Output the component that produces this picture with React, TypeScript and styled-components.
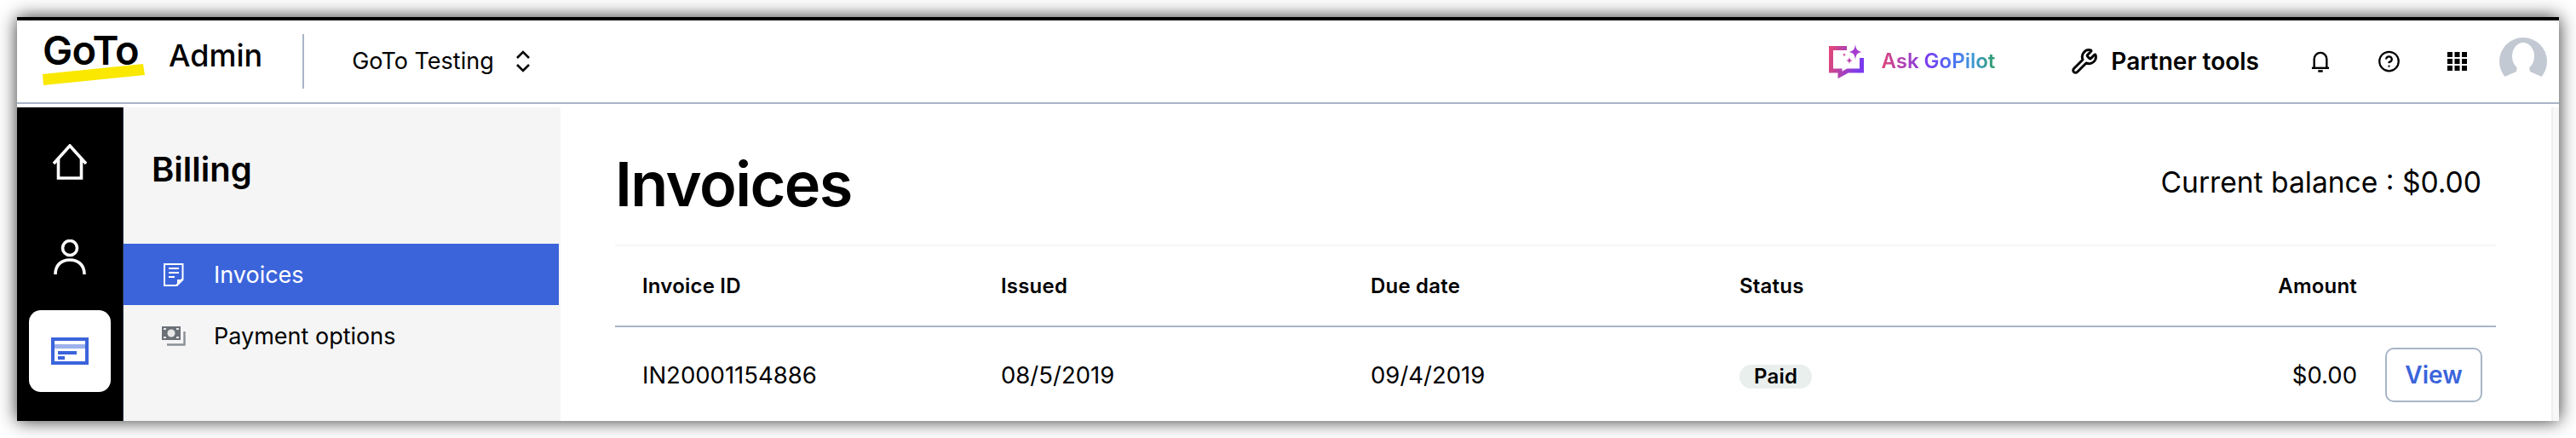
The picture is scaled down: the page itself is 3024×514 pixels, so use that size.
import React from "react";
import styled, { createGlobalStyle } from "styled-components";
import { Wrench, CircleHelp } from "lucide-react";

const Global = createGlobalStyle`
  html, body { margin: 0; padding: 0; background: #fff; overflow: hidden; }
  body { font-family: Inter, "Liberation Sans", sans-serif; color: #000; }
  * { box-sizing: border-box; }
`;

const Page = styled.div`
  width: 3024px;
  height: 514px;
  padding: 20px;
`;
const Frame = styled.div`
  width: 2984px;
  height: 474px;
  border-top: 4px solid #000;
  background: #fff;
  box-shadow: 0 0 20px rgba(0, 0, 0, 0.8);
  display: flex;
  flex-direction: column;
  overflow: hidden;
`;
const Header = styled.header`
  flex: none;
  height: 98px;
  border-bottom: 2px solid #a8b5c7;
  display: flex;
  align-items: center;
  padding: 0 14px 0 30px;
`;
const Logo = styled.div`
  flex: none;
  width: 120px;
  height: 60px;
  margin-top: -2px;
  display: flex;
  flex-direction: column;
`;
const LogoWord = styled.span`
  font-weight: 600;
  font-size: 47px;
  line-height: 36px;
  height: 34px;
  letter-spacing: -0.8px;
  white-space: nowrap;
  color: #000;
`;
const LogoMark = styled.svg`
  flex: none;
  width: 120px;
  height: 26px;
  display: block;
`;
const AppName = styled.span`
  font-size: 36px;
  font-weight: 500;
  line-height: 44px;
  margin: -14px 0 0 28px;
`;
const Divider = styled.div`
  width: 2px;
  height: 64px;
  background: #a8b5c7;
  margin: 0 56px 0 47px;
`;
const Account = styled.span`
  font-size: 27px;
  line-height: 34px;
`;
const Chevrons = styled.svg`
  width: 18px;
  height: 26px;
  margin-left: 25px;
  display: block;
`;
const Tools = styled.div`
  margin-left: auto;
  display: flex;
  align-items: center;
`;
const PilotLink = styled.div`
  display: flex;
  align-items: center;
  gap: 20px;
  margin-right: 89px;
`;
const PilotIcon = styled.svg`
  width: 41px;
  height: 40px;
  display: block;
`;
const PilotText = styled.span`
  font-size: 24px;
  font-weight: 600;
  line-height: 30px;
  background: linear-gradient(90deg, #e0477a 0%, #7a3aee 40%, #4f6ff5 62%, #3f97d8 80%, #2f9e6a 100%);
  -webkit-background-clip: text;
  background-clip: text;
  color: transparent;
`;
const PartnerLink = styled.div`
  display: flex;
  align-items: center;
  gap: 15px;
  font-size: 28px;
  font-weight: 600;
  margin-right: 61px;
`;
const IconSlot = styled.div<{ $w: number; $mr: number }>`
  width: ${(p) => p.$w}px;
  margin-right: ${(p) => p.$mr}px;
  display: flex;
  justify-content: center;
  align-items: center;
`;
const Avatar = styled.svg`
  width: 56px;
  height: 56px;
  display: block;
`;
const Body = styled.div`
  flex: 1;
  min-height: 0;
  margin-top: 4px;
  display: flex;
`;
const Rail = styled.nav`
  flex: none;
  width: 125px;
  background: #000;
  border-right: 1px solid #2b3646;
  padding-top: 8px;
  display: flex;
  flex-direction: column;
  align-items: center;
`;
const RailItem = styled.div`
  height: 112px;
  width: 100%;
  display: flex;
  align-items: center;
  justify-content: center;
`;
const RailTile = styled.div`
  width: 96px;
  height: 96px;
  margin-top: 6px;
  border-radius: 14px;
  background: #fff;
  display: flex;
  align-items: center;
  justify-content: center;
`;
const Panel = styled.aside`
  flex: none;
  width: 513px;
  background: #f5f5f5;
`;
const PanelTitle = styled.h2`
  margin: 0;
  height: 160px;
  padding: 49px 0 0 33px;
  font-size: 40px;
  font-weight: 600;
  line-height: 48px;
`;
const NavRow = styled.div<{ $active?: boolean }>`
  width: 511px;
  height: 72px;
  padding-left: 45px;
  display: flex;
  align-items: center;
  gap: 33px;
  font-size: 27px;
  background: ${(p) => (p.$active ? "#3b64db" : "transparent")};
  color: ${(p) => (p.$active ? "#fff" : "#000")};
`;
const NavIcon = styled.div`
  width: 28px;
  display: flex;
  justify-content: center;
`;
const Main = styled.main`
  flex: 1;
  min-width: 0;
  display: flex;
`;
const Content = styled.div`
  flex: 1;
  min-width: 0;
  padding: 0 65px 0 64px;
`;
const Strip = styled.div`
  flex: none;
  width: 9px;
  background: #f8f8f8;
  border-left: 2px solid #eeeeee;
`;
const TitleRow = styled.div`
  height: 163px;
  padding: 18px 17px 0 0;
  display: flex;
  align-items: center;
  justify-content: space-between;
  border-bottom: 2px solid #f6f6f6;
`;
const Title = styled.h1`
  margin: 0;
  font-size: 72px;
  font-weight: 600;
  line-height: 84px;
  letter-spacing: -1.6px;
`;
const Balance = styled.div`
  font-size: 33.6px;
  line-height: 44px;
  margin-top: -4px;
`;
const GridRow = styled.div<{ $head?: boolean }>`
  display: grid;
  grid-template-columns: 421px 434px 433px 1fr 300px 163px;
  padding-left: 32px;
  align-items: center;
  height: ${(p) => (p.$head ? "95px" : "112px")};
  font-size: ${(p) => (p.$head ? "24px" : "27.500px")};
  font-weight: ${(p) => (p.$head ? 600 : 400)};
  letter-spacing: ${(p) => (p.$head ? "0.2px" : "0")};
  border-bottom: ${(p) => (p.$head ? "2px solid #a8b5c7" : "none")};
`;
const AmountCell = styled.div`
  text-align: right;
`;
const Badge = styled.span`
  display: inline-flex;
  align-items: center;
  height: 28px;
  padding: 0 17px;
  border-radius: 14px;
  background: #e9efec;
  font-size: 24px;
  font-weight: 600;
  letter-spacing: 0.2px;
`;
const ViewButton = styled.button`
  width: 114px;
  height: 64px;
  margin-left: 33px;
  padding: 0;
  border: 2px solid #a8b5c7;
  border-radius: 10px;
  background: #fff;
  color: #3b64db;
  font-family: inherit;
  font-size: 28px;
  font-weight: 600;
`;

const App = () => (
  <Page>
    <Global />
    <Frame>
      <Header>
        <Logo>
          <LogoWord>GoTo</LogoWord>
          <LogoMark viewBox="0 0 120 26">
            <polygon points="0,12 118,0 120,13 1,25" fill="#fae800" />
          </LogoMark>
        </Logo>
        <AppName>Admin</AppName>
        <Divider />
        <Account>GoTo Testing</Account>
        <Chevrons viewBox="0 0 18 26" fill="none" stroke="#000" strokeWidth="2.6">
          <path d="M2 9l7-7 7 7M2 17l7 7 7-7" />
        </Chevrons>
        <Tools>
          <PilotLink>
            <PilotIcon viewBox="0 0 41 40" fill="none">
              <defs>
                <linearGradient id="pilot" x1="0" y1="0" x2="1" y2="0.2">
                  <stop offset="0" stopColor="#e0477a" />
                  <stop offset="1" stopColor="#7a3aee" />
                </linearGradient>
              </defs>
              <path
                d="M21 4.500H2.500V31H13v5l9-5H38.500V16"
                stroke="url(#pilot)"
                strokeWidth="5"
              />
              <path
                d="M31 0c.8 6 2 7.600 7.500 9-5.500 1.200-6.700 2.800-7.500 9-.8-6.200-2-7.800-7.500-9 5.500-1.400 6.700-3 7.500-9z"
                fill="#a63bd0"
              />
              <path
                d="M24 14.500c.4 3 1 4 4 4.500-3 .6-3.600 1.500-4 4.500-.4-3-1-3.900-4-4.500 3-.5 3.600-1.500 4-4.500z"
                fill="#c040b0"
              />
              <path
                d="M18 9.500c.2 2 .6 2.500 2.500 2.800-1.900.3-2.300.9-2.500 2.800-.2-1.900-.6-2.500-2.500-2.800 1.900-.3 2.300-.8 2.500-2.800z"
                fill="#d04aa0"
              />
            </PilotIcon>
            <PilotText>Ask GoPilot</PilotText>
          </PilotLink>
          <PartnerLink>
            <Wrench size={32} strokeWidth={2.2} color="#000" />
            <span>Partner tools</span>
          </PartnerLink>
          <IconSlot $w={22} $mr={56}>
            <svg width="24" height="28" viewBox="0 0 24 28" fill="none" stroke="#000" strokeWidth="2.6">
              <path d="M4 22V11a8 8 0 0 1 16 0v11" />
              <path d="M1 22.500h22" />
              <path d="M9 26.500h6" strokeWidth="2.800" />
            </svg>
          </IconSlot>
          <IconSlot $w={27} $mr={55}>
            <CircleHelp size={32} strokeWidth={2} color="#000" />
          </IconSlot>
          <IconSlot $w={23} $mr={38}>
            <svg width="23" height="22" viewBox="0 0 23 22" fill="#000">
              {[0, 8.5, 17].map((x) =>
                [0, 8, 16].map((y) => <rect key={`${x}-${y}`} x={x} y={y} width="6" height="6" />)
              )}
            </svg>
          </IconSlot>
          <Avatar viewBox="0 0 56 56">
            <circle cx="28" cy="28" r="28" fill="#c3c9d2" />
            <ellipse cx="28" cy="22" rx="13" ry="16" fill="#fff" />
            <path d="M21 34h14l1 6 16 7a28 28 0 0 1-48 0l16-7z" fill="#fff" />
          </Avatar>
        </Tools>
      </Header>
      <Body>
        <Rail>
          <RailItem>
            <svg width="42" height="42" viewBox="0 0 42 42" fill="none" stroke="#fff" strokeWidth="3.6">
              <path d="M2 23L21 2l19 21" />
              <path d="M7.500 17v23h27V17" />
            </svg>
          </RailItem>
          <RailItem>
            <svg width="38" height="42" viewBox="0 0 38 42" fill="none" stroke="#fff" strokeWidth="3.6">
              <circle cx="19" cy="10" r="8.500" />
              <path d="M2 41c0-11 7-17 17-17s17 6 17 17" />
            </svg>
          </RailItem>
          <RailTile>
            <svg width="44" height="32" viewBox="0 0 44 32">
              <rect width="44" height="32" fill="#3b64db" />
              <rect x="4" y="4" width="36" height="24" fill="#fff" />
              <rect x="4" y="8" width="36" height="5" fill="#9db1ec" />
              <rect x="8" y="16" width="22" height="4" fill="#3b64db" />
              <rect x="8" y="22" width="8" height="4" fill="#3b64db" />
            </svg>
          </RailTile>
        </Rail>
        <Panel>
          <PanelTitle>Billing</PanelTitle>
          <NavRow $active>
            <NavIcon>
              <svg width="24" height="27" viewBox="0 0 24 27" fill="none">
                <path d="M1 1h21.500v17L15 26H1z" stroke="#fff" strokeWidth="2" />
                <path d="M6 6h12M6 11h12M6 16h7" stroke="#fff" strokeWidth="2.200" />
                <path d="M24 19h-8v8z" fill="#fff" />
              </svg>
            </NavIcon>
            <span>Invoices</span>
          </NavRow>
          <NavRow>
            <NavIcon>
              <svg width="28" height="23" viewBox="0 0 28 23">
                <rect width="22" height="16" fill="#6c7178" />
                <circle cx="11" cy="8" r="4.500" fill="#e8e8e8" />
                <path d="M2 2h3v2H2zM17 2h3v2h-3zM2 12h3v2H2zM17 12h3v2h-3z" fill="#e8e8e8" />
                <path d="M6 21.500h20.500V6" fill="none" stroke="#8b9096" strokeWidth="2.400" />
              </svg>
            </NavIcon>
            <span>Payment options</span>
          </NavRow>
        </Panel>
        <Main>
          <Content>
            <TitleRow>
              <Title>Invoices</Title>
              <Balance>Current balance : $0.00</Balance>
            </TitleRow>
            <GridRow $head>
              <div>Invoice ID</div>
              <div>Issued</div>
              <div>Due date</div>
              <div>Status</div>
              <AmountCell>Amount</AmountCell>
              <div />
            </GridRow>
            <GridRow>
              <div>IN20001154886</div>
              <div>08/5/2019</div>
              <div>09/4/2019</div>
              <div>
                <Badge>Paid</Badge>
              </div>
              <AmountCell>$0.00</AmountCell>
              <div>
                <ViewButton>View</ViewButton>
              </div>
            </GridRow>
          </Content>
          <Strip />
        </Main>
      </Body>
    </Frame>
  </Page>
);

export default App;
